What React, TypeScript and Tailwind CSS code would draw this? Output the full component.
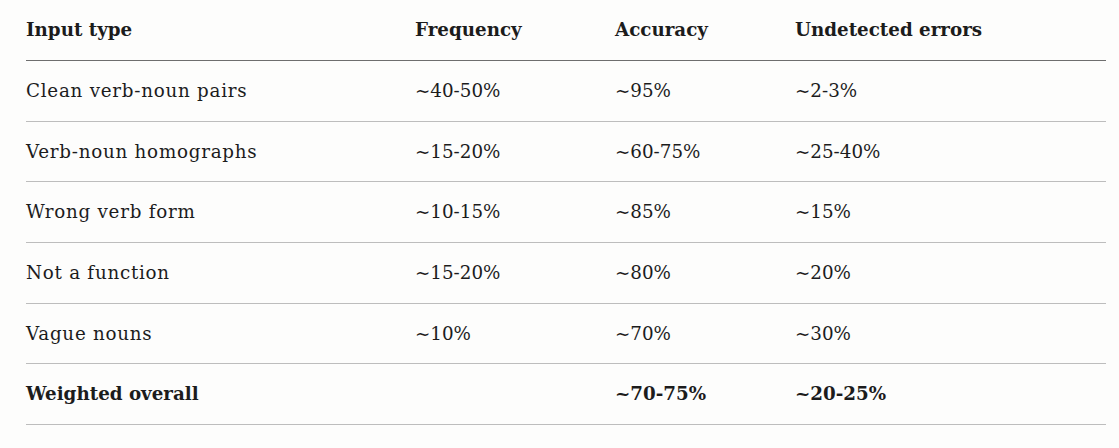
import React from "react";

const rows: { cells: string[]; bold?: boolean }[] = [
  { cells: ["Clean verb-noun pairs", "~40-50%", "~95%", "~2-3%"] },
  { cells: ["Verb-noun homographs", "~15-20%", "~60-75%", "~25-40%"] },
  { cells: ["Wrong verb form", "~10-15%", "~85%", "~15%"] },
  { cells: ["Not a function", "~15-20%", "~80%", "~20%"] },
  { cells: ["Vague nouns", "~10%", "~70%", "~30%"] },
  { cells: ["Weighted overall", "", "~70-75%", "~20-25%"], bold: true },
];

const widths = ["w-[389px]", "w-[200px]", "w-[180px]", "flex-1"];

export default function App() {
  return (
    <div
      className="w-[1119px] h-[448px] bg-[#fdfdfc] text-[#1c1c1c] px-[26px]"
      style={{ fontFamily: '"DejaVu Serif", "Liberation Serif", serif' }}
    >
      <div className="w-[1080px]">
        <div className="flex items-center h-[61px] border-b border-[#6e6e6e] font-bold text-[18.3px]">
          {["Input type", "Frequency", "Accuracy", "Undetected errors"].map((h, i) => (
            <div key={h} className={widths[i]}>{h}</div>
          ))}
        </div>
        {rows.map((r, ri) => (
          <div
            key={ri}
            className={`flex items-center h-[60.67px] border-b border-[#bdbdbd] text-[18.3px] ${r.bold ? "font-bold" : ""}`}
          >
            {r.cells.map((c, i) => (
              <div
                key={i}
                className={`${widths[i]} ${i === 0 && !r.bold ? "tracking-[0.75px]" : ""}`}
              >
                {c}
              </div>
            ))}
          </div>
        ))}
      </div>
    </div>
  );
}
